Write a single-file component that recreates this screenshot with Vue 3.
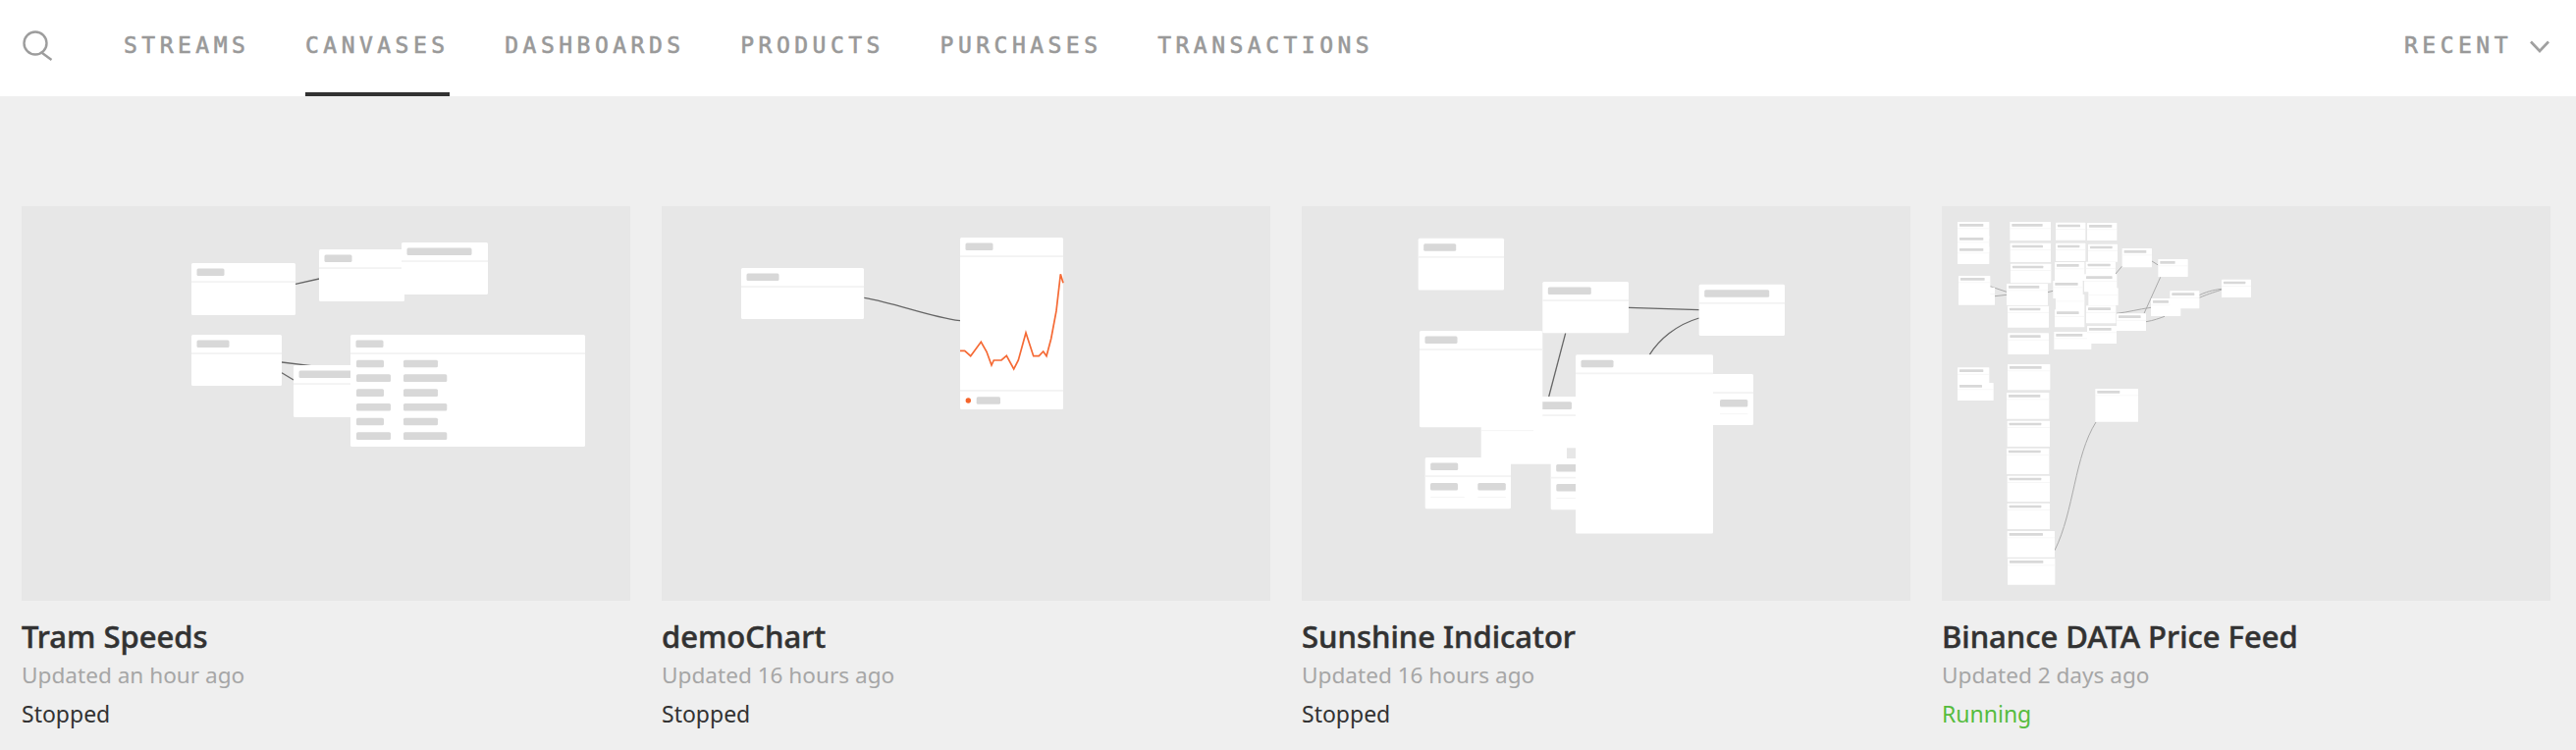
<template>
  <div class="page">
    <nav class="topbar">
      <svg class="search" width="32" height="32" viewBox="0 0 32 32">
        <circle cx="13" cy="13" r="11.5" />
        <path d="M20 23 L29.5 30" />
      </svg>
      <ul class="tabs">
        <li v-for="tab in tabs" :key="tab" :class="{ active: tab === 'CANVASES' }">{{ tab }}</li>
      </ul>
      <div class="sort">
        <span>RECENT</span>
        <svg width="20" height="13" viewBox="0 0 20 13"><path d="M1 1.5 L10 11 L19 1.5" /></svg>
      </div>
    </nav>

    <main class="cards">
      <article v-for="card in cards" :key="card.name" class="card">
        <svg class="thumb" viewBox="0 0 620 402">
          <path v-for="d in card.wires" :key="d" class="wire" :class="{ faint: card.faint }" :d="d" />
          <g v-for="(n, i) in card.nodes" :key="i">
            <rect class="node" :x="n.x" :y="n.y" :width="n.w" :height="n.h" :rx="n.s * 1.5" />
            <rect class="rule" :x="n.x" :y="n.y + 18.2 * n.s" :width="n.w" :height="1.8 * n.s" />
            <rect v-if="n.pill" class="pill" :x="n.x + 5.5 * n.s" :y="n.y + 5.5 * n.s" :width="n.pill" :height="7.5 * n.s" :rx="n.s * 1.5" />
            <rect v-for="(p, j) in n.pills" :key="j" class="pill" :x="p[0]" :y="p[1]" :width="p[2]" :height="7.6" rx="1.5" />
            <rect v-for="(r, j) in n.rules" :key="'r' + j" class="rule" :x="r[0]" :y="r[1]" :width="r[2]" :height="r[3] || 0.8" />
          </g>
          <rect v-for="(g, i) in card.gaps" :key="i" class="gap" :x="g[0]" :y="g[1]" :width="g[2]" :height="g[3]" />
          <template v-if="card.chart">
            <polyline class="chart" :points="card.chart" />
            <circle class="dot" cx="312.3" cy="198" r="2.7" />
          </template>
        </svg>
        <h3>{{ card.name }}</h3>
        <p class="updated">{{ card.updated }}</p>
        <p class="state" :class="{ running: card.state === 'Running' }">{{ card.state }}</p>
      </article>
    </main>
  </div>
</template>

<script setup>
const tabs = ['STREAMS', 'CANVASES', 'DASHBOARDS', 'PRODUCTS', 'PURCHASES', 'TRANSACTIONS']

const node = (x, y, w, h, pill, more = {}) => ({ x, y, w, h, pill, s: 1, ...more })

// tiny nodes of the last canvas: x1, x2, y1, y2, pill width, measured on a 3x crop
const tiny = ([x1, x2, y1, y2, p]) => ({
  x: x1 / 3 - 8,
  y: y1 / 3,
  w: (x2 - x1) / 3,
  h: (y2 - y1) / 3,
  pill: p / 3,
  s: 0.36
})

const tramNodes = [
  node(173, 58, 106, 53, 28),
  node(303, 44, 87, 53, 28),
  node(387, 37, 88, 53, 66),
  node(173, 131, 92, 52, 33),
  node(277, 162, 88, 53, 66),
  node(335, 131, 239, 114, 28, {
    pills: [
      [341, 156.7, 28], [389, 156.7, 35],
      [341, 171.3, 35], [389, 171.3, 44.3],
      [341, 186.3, 28], [389, 186.3, 35],
      [341, 201, 35], [389, 201, 44.3],
      [341, 215.7, 28], [389, 215.7, 35],
      [341, 230.3, 35], [389, 230.3, 44.3]
    ]
  })
]

const demoNodes = [
  node(81, 63, 125, 52, 33),
  node(304, 32, 105, 175, 28, {
    pills: [[320.7, 194.2, 24.3]],
    rules: [[304, 187, 105, 1.8]]
  })
]

const chart = [
  [744, 412], [758, 412], [776, 428], [808, 385], [825, 415], [840, 456], [847, 441],
  [870, 441], [886, 427], [908, 468], [922, 441], [945, 357], [968, 428], [985, 428],
  [998, 414], [1008, 428], [1022, 375], [1038, 290], [1051, 178], [1059, 205]
].map(([x, y]) => `${(x / 3 + 56).toFixed(1)},${(y / 3 + 10).toFixed(1)}`).join(' ')

const sunNodes = [
  node(118.7, 32.7, 87.3, 52.7, 33),
  node(182.7, 194, 98, 68.7, 0, {
    pills: [[235, 199.3, 40]],
    rules: [[182.7, 228.3, 53.5]]
  }),
  node(253.7, 257.5, 60, 51.8, 30, {
    pills: [[259.3, 283, 30]],
    rules: [[259.3, 297.3, 30]]
  }),
  node(120, 127, 125.3, 98.3, 33),
  node(125.7, 256, 87.3, 52.3, 28, {
    pills: [[131, 282, 28], [179.3, 282, 28.5]],
    rules: [[131.3, 296.2, 34.5], [179.3, 296.2, 28.5]]
  }),
  node(245.3, 77, 87.7, 52.3, 44),
  node(404.7, 79.7, 87.3, 52.3, 66),
  node(372.7, 171, 87.3, 52, 0, {
    pills: [[426, 197, 28.3]],
    rules: [[426, 211.3, 28.3]]
  }),
  node(279, 151.3, 140, 182.3, 33)
]

const binanceNodes = [
  [72, 169, 48, 100, 73], [72, 169, 90, 140, 73], [72, 169, 123, 177, 73],
  [232, 357, 48, 105, 94], [233, 357, 113, 171, 94], [234, 358, 176, 235, 94],
  [222, 348, 237, 303, 94], [225, 351, 305, 371, 94], [226, 351, 388, 453, 94],
  [225, 355, 483, 562, 98], [222, 352, 570, 650, 97], [224, 354, 656, 735, 98],
  [222, 352, 740, 819, 98], [224, 354, 824, 903, 98], [224, 354, 908, 987, 98],
  [224, 369, 993, 1073, 103], [225, 370, 1077, 1157, 103],
  [372, 463, 50, 104, 69], [372, 463, 113, 168, 67], [369, 460, 171, 228, 68],
  [372, 460, 270, 318, 0], [364, 455, 228, 282, 70], [369, 460, 316, 370, 68],
  [367, 481, 384, 438, 81], [468, 559, 51, 105, 70], [471, 561, 116, 170, 68],
  [472, 563, 250, 303, 0], [464, 555, 170, 224, 69], [459, 559, 208, 262, 80],
  [465, 556, 304, 358, 69], [468, 558, 366, 420, 68], [558, 648, 328, 381, 68],
  [575, 666, 129, 187, 68], [685, 776, 162, 216, 46], [663, 754, 282, 336, 48],
  [721, 811, 259, 313, 69], [879, 969, 224, 279, 67],
  [75, 186, 248, 302, 0], [75, 172, 213, 270, 74],
  [72, 169, 493, 545, 73], [72, 182, 540, 594, 69], [493, 624, 558, 659, 69]
].map(tiny)

const cards = [
  {
    name: 'Tram Speeds',
    updated: 'Updated an hour ago',
    state: 'Stopped',
    nodes: tramNodes,
    wires: ['M279 79.3 L303 74', 'M265 159 L295 162.7', 'M265 169.7 L277 177']
  },
  {
    name: 'demoChart',
    updated: 'Updated 16 hours ago',
    state: 'Stopped',
    nodes: demoNodes,
    chart,
    wires: ['M206.3 93.3 C240 99 270 112 304 116.7']
  },
  {
    name: 'Sunshine Indicator',
    updated: 'Updated 16 hours ago',
    state: 'Stopped',
    nodes: sunNodes,
    gaps: [[270, 246.3, 9, 10.7]],
    wires: ['M333 103.3 L404.7 105.7', 'M404.7 114 C381 121 364 136 354.3 151.3', 'M268.7 129.3 L251.7 194']
  },
  {
    name: 'Binance DATA Price Feed',
    updated: 'Updated 2 days ago',
    state: 'Running',
    nodes: binanceNodes,
    faint: true,
    wires: [
      'M49.3 81.7 L66 87.3', 'M54 91.7 L66 90.3', 'M108 87.7 L113.3 86.3',
      'M177 69 L183.7 61', 'M214 56 L220.3 60', 'M206 109.3 L222.7 72.3',
      'M178 109.3 C190 108 200 105 213 103.3', 'M208 117.7 C216 116.5 222 114 227 112.3',
      'M262.3 90.7 C272 86 280 85 285 84.3', 'M262.3 93.3 C272 89 280 87 285 85',
      'M115 350.7 C135 310 135 255 157 220'
    ]
  }
]
</script>

<style>
html, body {
  margin: 0;
  background: #efefef;
  overflow: hidden;
}
</style>

<style scoped>
.page {
  width: 2624px;
  height: 764px;
  overflow: hidden;
  background: #efefef;
}

.topbar {
  display: flex;
  align-items: center;
  height: 98px;
  padding: 0 27px 0 23px;
  background: #fff;
  box-sizing: border-box;
}

.search {
  margin-top: -4px;
  flex: none;
}
.search circle, .search path {
  fill: none;
  stroke: #9d9d9d;
  stroke-width: 2.4;
}

.tabs {
  display: flex;
  gap: 56.7px;
  height: 100%;
  margin: 0 0 0 71px;
  padding: 0;
  list-style: none;
}
.tabs li, .sort span {
  font-family: "DejaVu Sans Mono", monospace;
  font-size: 23px;
  font-weight: 400;
  letter-spacing: 4.48px;
  color: #999;
  -webkit-text-stroke: 0.6px #999;
}
.tabs li {
  display: flex;
  align-items: center;
  box-sizing: border-box;
  height: 98px;
  padding-bottom: 2px;
  border-bottom: 4px solid transparent;
}
.tabs li.active {
  border-bottom-color: #323232;
}

.sort {
  display: flex;
  align-items: center;
  gap: 18px;
  margin-left: auto;
  margin-top: -6px;
}
.sort svg {
  margin-top: 2px;
}
.sort svg path {
  fill: none;
  stroke: #a0a0a0;
  stroke-width: 2.6;
}

.cards {
  display: grid;
  grid-template-columns: repeat(4, 620px);
  gap: 32px;
  padding: 112px 0 0 22px;
}

.thumb {
  display: block;
  width: 620px;
  height: 402px;
  background: #e7e7e7;
}
.node {
  fill: #fff;
}
.rule {
  fill: #f3f3f3;
}
.pill {
  fill: #d8d8d8;
}
.gap {
  fill: #e7e7e7;
}
.wire {
  fill: none;
  stroke: #666;
  stroke-width: 1.3;
}
.wire.faint {
  stroke: #aaa;
  stroke-width: 1;
}
.chart {
  fill: none;
  stroke: #f56a35;
  stroke-width: 1.7;
}
.dot {
  fill: #f5642a;
}

h3, p {
  margin: 0;
  font-family: "Noto Sans", sans-serif;
}
h3 {
  margin-top: 16px;
  font-size: 31px;
  line-height: 40px;
  font-weight: 500;
  color: #323232;
  -webkit-text-stroke: 0.5px #323232;
}
.updated {
  font-size: 22.6px;
  line-height: 39px;
  color: #a6a6a6;
}
.state {
  font-size: 23px;
  line-height: 40px;
  color: #323232;
}
.state.running {
  color: #55bc3e;
}
</style>
